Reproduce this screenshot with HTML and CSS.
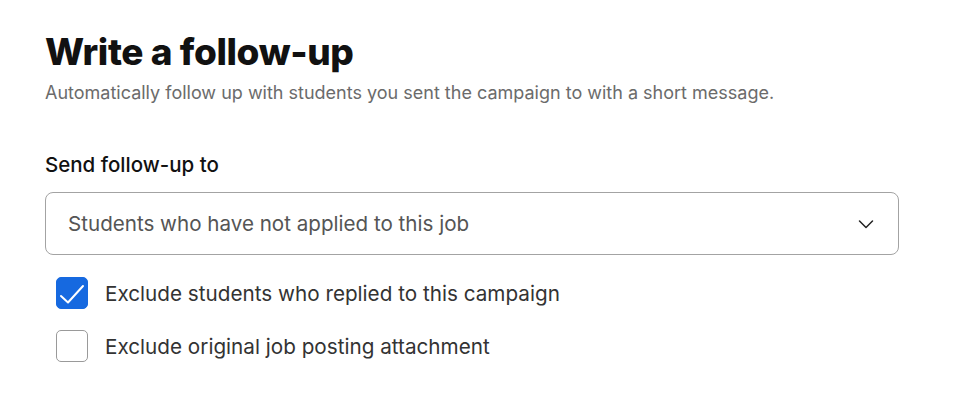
FILE: index.html
```html
<!DOCTYPE html>
<html lang="en">
  <head>
    <meta charset="UTF-8" />
    <meta name="viewport" content="width=device-width, initial-scale=1.0" />
    <title>Write a follow-up</title>
    <link rel="stylesheet" href="styles.css">
  </head>
  <body>
    <div class="panel">
      <!-- header -->
      <h1 class="title">Write a follow-up</h1>
      <p class="subtitle">Automatically follow up with students you sent the campaign to with a short message.</p>

      <!-- recipients -->
      <div class="field">
        <label class="field-label">Send follow-up to</label>
        <div class="select">
          <span class="select-value">Students who have not applied to this job</span>
          <svg class="chevron" width="16" height="16" viewBox="0 0 16 16">
            <path d="M1.5 5l6.5 6.5 6.5-6.5" fill="none" stroke="#222" stroke-width="1.5" stroke-linecap="round" stroke-linejoin="round" />
          </svg>
        </div>
      </div>

      <!-- options -->
      <ul class="options">
        <li class="option">
          <span class="box checked">
            <svg width="32" height="32" viewBox="0 0 32 32">
              <path d="M5 19l7 6.5L27 9" fill="none" stroke="#fff" stroke-width="2" stroke-linecap="round" stroke-linejoin="round" />
            </svg>
          </span>
          <span class="option-text">Exclude students who replied to this campaign</span>
        </li>
        <li class="option">
          <span class="box"></span>
          <span class="option-text">Exclude original job posting attachment</span>
        </li>
      </ul>
    </div>
  </body>
</html>
```

FILE: styles.css
```css
* {
  margin: 0;
  padding: 0;
  box-sizing: border-box;
}
ul {
  list-style: none;
}
body {
  font-family: Inter, "Noto Sans", sans-serif;
  color: #111;
  background: #fff;
}

.panel {
  width: 854px;
  margin: 0 0 0 45px;
  padding-top: 28px;
}

.title {
  font-size: 37px;
  font-weight: 800;
  line-height: 48px;
  letter-spacing: -0.4px;
}

.subtitle {
  margin-top: 5px;
  font-size: 18px;
  line-height: 24px;
  color: #6b6b6b;
}

.field {
  margin-top: 47px;
}

.field-label {
  display: block;
  font-size: 20.5px;
  font-weight: 500;
  line-height: 26px;
}

.select {
  display: flex;
  align-items: center;
  justify-content: space-between;
  height: 63px;
  margin-top: 14px;
  padding: 0 24px 0 22px;
  border: 1px solid #a3a3a3;
  border-radius: 8px;
}

.select-value {
  font-size: 20.6px;
  color: #555;
}

.options {
  margin-top: 22px;
  padding-left: 11px;
}

.option {
  display: flex;
  align-items: center;
  height: 32px;
  margin-bottom: 21px;
}

.box {
  position: relative;
  width: 32px;
  height: 32px;
  border: 1.5px solid #9a9a9a;
  border-radius: 5px;
}

.box.checked {
  background-color: #1669e0;
  border-color: #1669e0;
}

.box svg {
  position: absolute;
  top: -1.5px;
  left: -1.5px;
}

.option-text {
  margin-left: 17px;
  font-size: 20.7px;
  color: #333;
}
```
